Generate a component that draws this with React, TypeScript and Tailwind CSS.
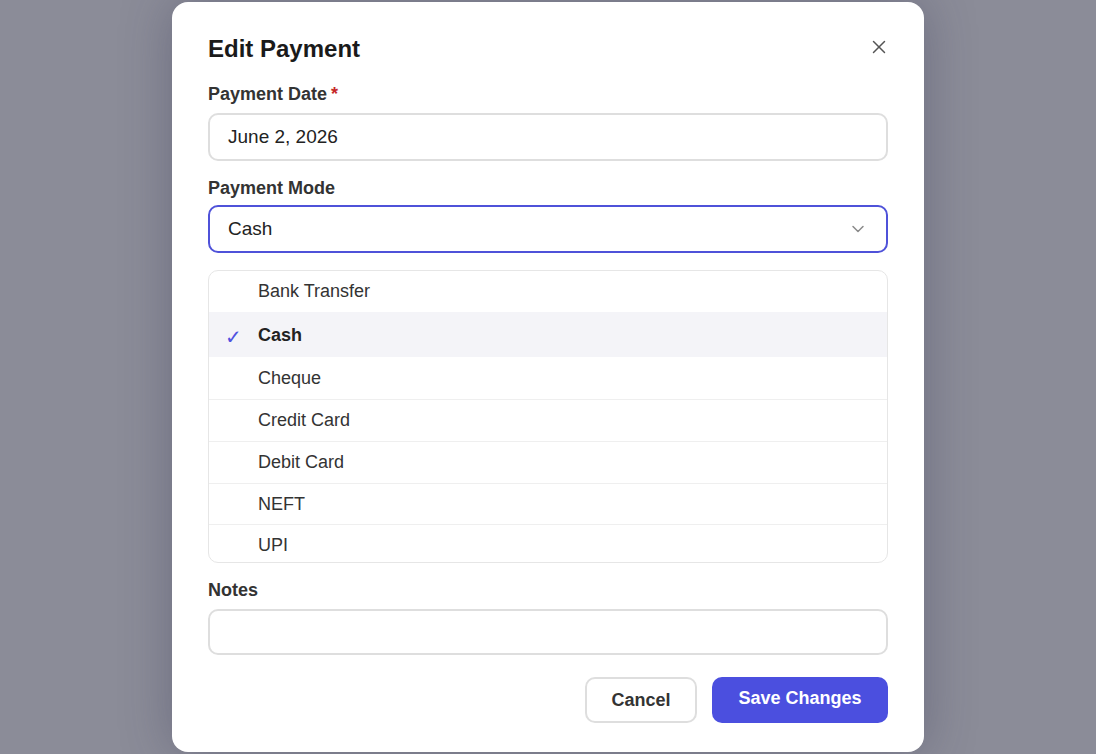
import { X, ChevronDown } from "lucide-react";

const modes = ["Bank Transfer", "Cash", "Cheque", "Credit Card", "Debit Card", "NEFT", "UPI"];
const rowHeights = ["h-[41px]", "h-[45px]", "h-[42px]", "h-[42px]", "h-[42px]", "h-[41px]", "h-[41px]"];

const Field = ({ label, required, className, children }: { label: string; required?: boolean; className?: string; children: React.ReactNode }) => (
  <div className={className}>
    <label className="block text-[18px] leading-[22px] font-bold text-[#333]">
      {label}
      {required && <span className="ml-1 text-[#c62828]">*</span>}
    </label>
    {children}
  </div>
);

export default function App() {
  const selected = "Cash";

  return (
    <div
      className="min-h-screen w-full bg-[#8b8c98] flex justify-center pt-[2px]"
      style={{ fontFamily: '"Liberation Sans", Arial, sans-serif' }}
    >
      <div className="w-[752px] h-[750px] bg-white rounded-[16px] shadow-[0_0_50px_rgba(50,50,80,0.35)] px-9 pt-8 pb-[29px]">
        {/* Header */}
        <div className="flex items-center justify-between">
          <h2 className="text-[24px] leading-[30px] font-bold text-[#1a1a1a]">Edit Payment</h2>
          <button className="text-[#555] -mr-[2px] -mt-[4px]">
            <X className="w-[22px] h-[22px]" strokeWidth={1.6} />
          </button>
        </div>

        <Field label="Payment Date" required className="mt-[19px]">
          <div className="mt-2 h-12 rounded-[10px] border-2 border-[#dedede] px-[18px] flex items-center text-[19px] text-[#222]">
            June 2, 2026
          </div>
        </Field>

        <Field label="Payment Mode" className="mt-4">
          <div className="mt-[6px] h-12 rounded-[10px] border-2 border-[#4f52d9] px-[18px] flex items-center justify-between text-[19px] text-[#222]">
            <span>{selected}</span>
            <ChevronDown className="w-[20px] h-[20px] text-[#8a8a8a]" strokeWidth={1.8} />
          </div>
        </Field>

        {/* Options list */}
        <div className="mt-[17px] h-[293px] overflow-hidden rounded-[10px] border border-[#e6e6e6]">
          {modes.map((m, i) => {
            const active = m === selected;
            return (
              <div
                key={m}
                className={`${rowHeights[i]} flex items-center ${i > 0 ? "border-t" : ""} ${
                  i >= 3 ? "border-[#efefef]" : "border-transparent"
                } ${active ? "bg-[#f4f4f8]" : ""}`}
              >
                <div className="w-[49px] flex justify-center">
                  {active && <span className="text-[#4f52e0] text-[20px] leading-none mt-[4px]">✓</span>}
                </div>
                <span className={`text-[18px] ${active ? "font-bold text-[#222]" : "text-[#333]"}`}>{m}</span>
              </div>
            );
          })}
        </div>

        <Field label="Notes" className="mt-4">
          <div className="mt-2 h-[46px] rounded-[10px] border-2 border-[#dedede]" />
        </Field>

        {/* Footer */}
        <div className="mt-[22px] flex justify-end gap-[15px]">
          <button className="h-[46px] w-[112px] rounded-[10px] border-2 border-[#dedede] bg-white text-[18px] font-bold text-[#333]">
            Cancel
          </button>
          <button className="h-[46px] w-[176px] rounded-[10px] bg-[#4b4fdf] text-[18px] font-bold text-white pb-[3px]">
            Save Changes
          </button>
        </div>
      </div>
    </div>
  );
}
